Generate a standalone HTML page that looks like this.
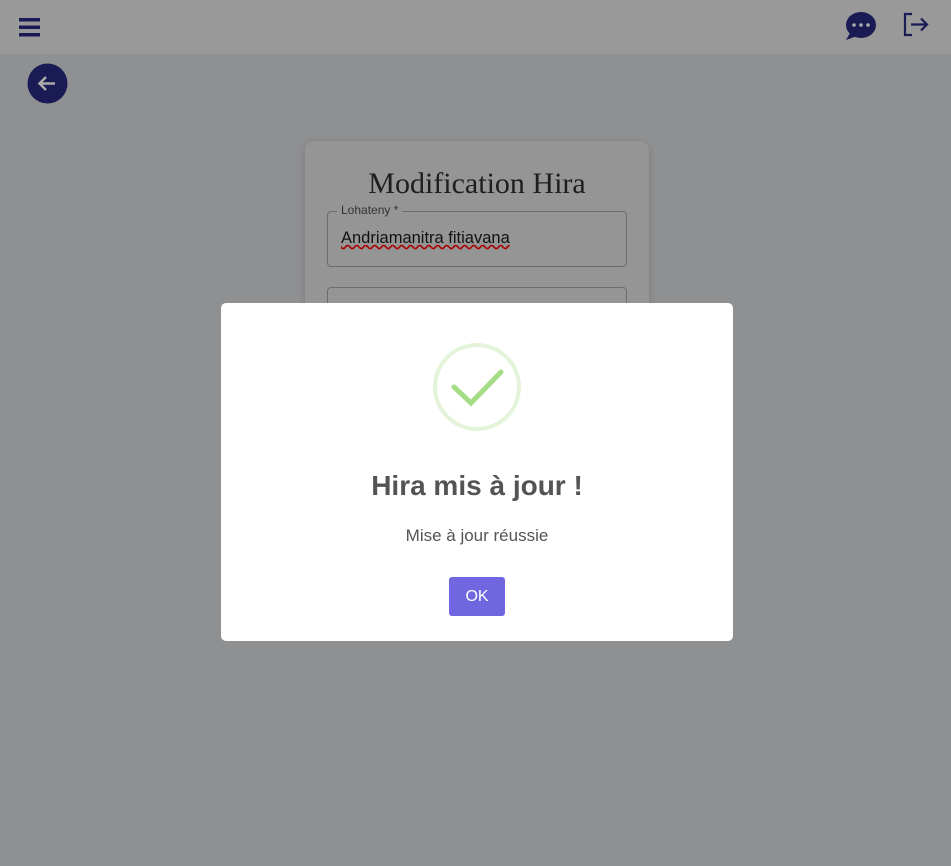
<!DOCTYPE html>
<html><head><meta charset="utf-8"><style>
body{margin:0;width:951px;height:866px;background:#8f9092;position:relative;overflow:hidden;font-family:"Liberation Sans",sans-serif}
.hdr{position:absolute;left:0;top:0;width:951px;height:54px;background:#999999}
.card{position:absolute;left:305px;top:141px;width:344px;height:420px;background:#959595;border-radius:10px;box-shadow:0 2px 8px rgba(0,0,0,.15)}
.card h1{margin:0;position:absolute;top:26px;width:100%;text-align:center;font:30px "Liberation Serif",serif;color:#1e1e1e}
.fld{position:absolute;left:22px;width:298px;border:1px solid #6d6d6d;border-radius:4px}
.modal{position:absolute;left:221px;top:303px;width:512px;height:338px;background:#fff;border-radius:5px;text-align:center;font-family:"Liberation Sans",sans-serif;color:#545454}
</style></head><body>
<div class="hdr"></div>
<svg style="position:absolute;left:18px;top:17px" width="24" height="20"><rect x="1" y="1" width="21" height="3.5" fill="#1a1a55"/><rect x="1" y="8.5" width="21" height="3.5" fill="#1a1a55"/><rect x="1" y="16" width="21" height="3.5" fill="#1a1a55"/></svg>
<svg style="position:absolute;left:844px;top:11px" width="34" height="30"><ellipse cx="17" cy="14" rx="15" ry="13" fill="#1a1a55"/><path d="M6 22 L2 29 L13 25Z" fill="#1a1a55"/><circle cx="10" cy="14" r="1.8" fill="#aaa"/><circle cx="17" cy="14" r="1.8" fill="#aaa"/><circle cx="24" cy="14" r="1.8" fill="#aaa"/></svg>
<svg style="position:absolute;left:902px;top:12px" width="28" height="26" fill="none" stroke="#1a1a55" stroke-width="2.2"><path d="M10 2 H3 V23 H10"/><path d="M9 12.5 H25 M19 6.5 L25 12.5 L19 18.5"/></svg>
<svg style="position:absolute;left:27px;top:63px" width="41" height="41"><circle cx="20.5" cy="20.5" r="20" fill="#1a1a55"/><path d="M28 20.5 H13 M19 14 L12.5 20.5 L19 27" stroke="#aaa" stroke-width="2.5" fill="none"/></svg>
<div class="card"><h1>Modification Hira</h1>
<div class="fld" style="top:70px;height:54px"><span style="position:absolute;left:9px;top:-9px;background:#959595;padding:0 4px;font-size:12px;color:#333">Lohateny *</span><span style="position:absolute;left:13px;top:17px;font-size:16.5px;color:#111;text-decoration:underline wavy #a00">Andriamanitra fitiavana</span></div>
<div class="fld" style="top:146px;height:54px"></div>
</div>
<div class="modal">
<svg style="position:absolute;left:210px;top:38px" width="92" height="92"><circle cx="46" cy="46" r="42" fill="none" stroke="#e4f4da" stroke-width="4"/><path d="M23 46 L40 62 L70 31" fill="none" stroke="#a5dc86" stroke-width="5" stroke-linecap="round"/></svg>
<div style="position:absolute;top:167px;width:100%;font-size:28px;font-weight:bold">Hira mis à jour !</div>
<div style="position:absolute;top:223px;width:100%;font-size:17px">Mise à jour réussie</div>
<div style="position:absolute;left:228px;top:274px;width:56px;height:39px;background:#7066e0;border-radius:3px;color:#fff;font-size:16px;line-height:39px">OK</div>
</div>
</body></html>
